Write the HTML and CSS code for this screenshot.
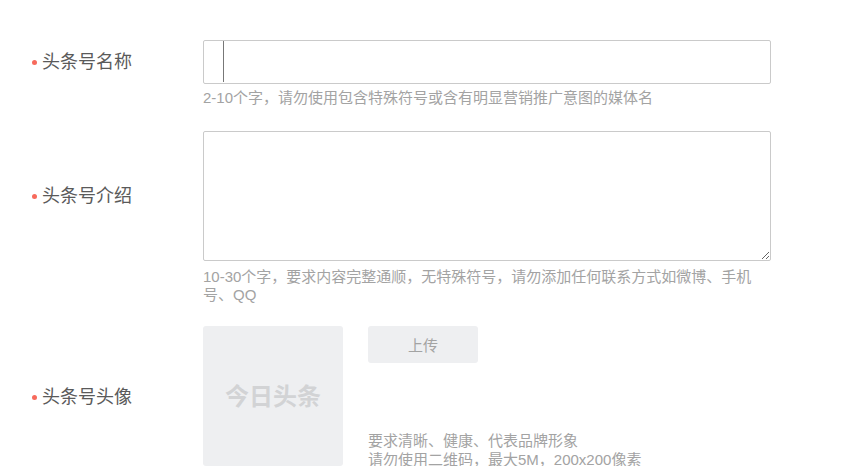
FILE: index.html
```html
<!DOCTYPE html>
<html lang="zh-CN">
<head>
    <meta charset="UTF-8">
    <title>头条号信息</title>
    <link rel="stylesheet" href="styles.css">
</head>
<body>
    <form class="account-form">
        <div class="form-row">
            <label class="form-label">头条号名称</label>
            <div class="input-wrap">
                <input class="text-input" type="text">
                <span class="caret"></span>
            </div>
            <p class="tip">2-10个字，请勿使用包含特殊符号或含有明显营销推广意图的媒体名</p>
        </div>

        <div class="form-row intro-row">
            <label class="form-label">头条号介绍</label>
            <textarea class="text-area"></textarea>
            <p class="tip">10-30个字，要求内容完整通顺，无特殊符号，请勿添加任何联系方式如微博、手机号、QQ</p>
        </div>

        <div class="form-row avatar-row">
            <label class="form-label">头条号头像</label>
            <div class="avatar-box">
                <div class="avatar"><span>今日头条</span></div>
                <div class="avatar-side">
                    <button class="upload-btn" type="button">上传</button>
                    <p class="avatar-tip">要求清晰、健康、代表品牌形象<br>请勿使用二维码，最大5M，200x200像素</p>
                </div>
            </div>
        </div>
    </form>
</body>
</html>
```

FILE: styles.css
```css
* {
    margin: 0;
    padding: 0;
    box-sizing: border-box;
}

body {
    font-family: "Liberation Sans", "Noto Sans CJK SC", sans-serif;
    background-color: #fff;
    color: #555;
    overflow: hidden;
}

.account-form {
    padding: 40px 0 0 31px;
}

.form-row {
    display: grid;
    grid-template-columns: 172px 568px;
    align-items: center;
    margin-bottom: 24px;
}

.form-label {
    display: flex;
    align-items: center;
    font-size: 18px;
    line-height: 24px;
    color: #5a5a5a;
}

.form-label::before {
    content: "";
    width: 5px;
    height: 5px;
    margin: 1px 5px 0 1px;
    border-radius: 50%;
    background-color: #f76a5c;
}

.input-wrap {
    position: relative;
    height: 44px;
}

.text-input,
.text-area {
    display: block;
    width: 100%;
    border: 1px solid #cacaca;
    border-radius: 2px;
    background-color: #fff;
    outline: none;
}

.text-input {
    height: 44px;
}

.text-area {
    height: 130px;
}

.caret {
    position: absolute;
    left: 20px;
    top: 1px;
    width: 1px;
    height: 41px;
    background-color: #777;
}

.tip {
    grid-column: 2;
    padding-right: 15px;
    margin-top: 5px;
    font-size: 15px;
    line-height: 18px;
    color: #a3a3a3;
}

.intro-row {
    margin-bottom: 22px;
}

.intro-row .tip {
    margin-top: 7px;
}

.avatar-row {
    margin-bottom: 0;
}

.avatar-row .form-label {
    padding-top: 2px;
}

.avatar-box {
    display: flex;
    gap: 25px;
}

.avatar {
    display: flex;
    align-items: center;
    justify-content: center;
    width: 140px;
    height: 140px;
    padding-bottom: 4px;
    border-radius: 3px;
    background-color: #eeeff1;
    font-size: 24px;
    font-weight: bold;
    color: #d2d3d5;
}

.avatar-side {
    display: flex;
    flex-direction: column;
    justify-content: space-between;
    align-items: flex-start;
}

.upload-btn {
    width: 110px;
    height: 37px;
    border: none;
    border-radius: 3px;
    background-color: #eeeff1;
    font-family: inherit;
    font-size: 15px;
    color: #a3a3a3;
}

.avatar-tip {
    margin-bottom: -3px;
    font-size: 15px;
    line-height: 19px;
    color: #a3a3a3;
}
```
